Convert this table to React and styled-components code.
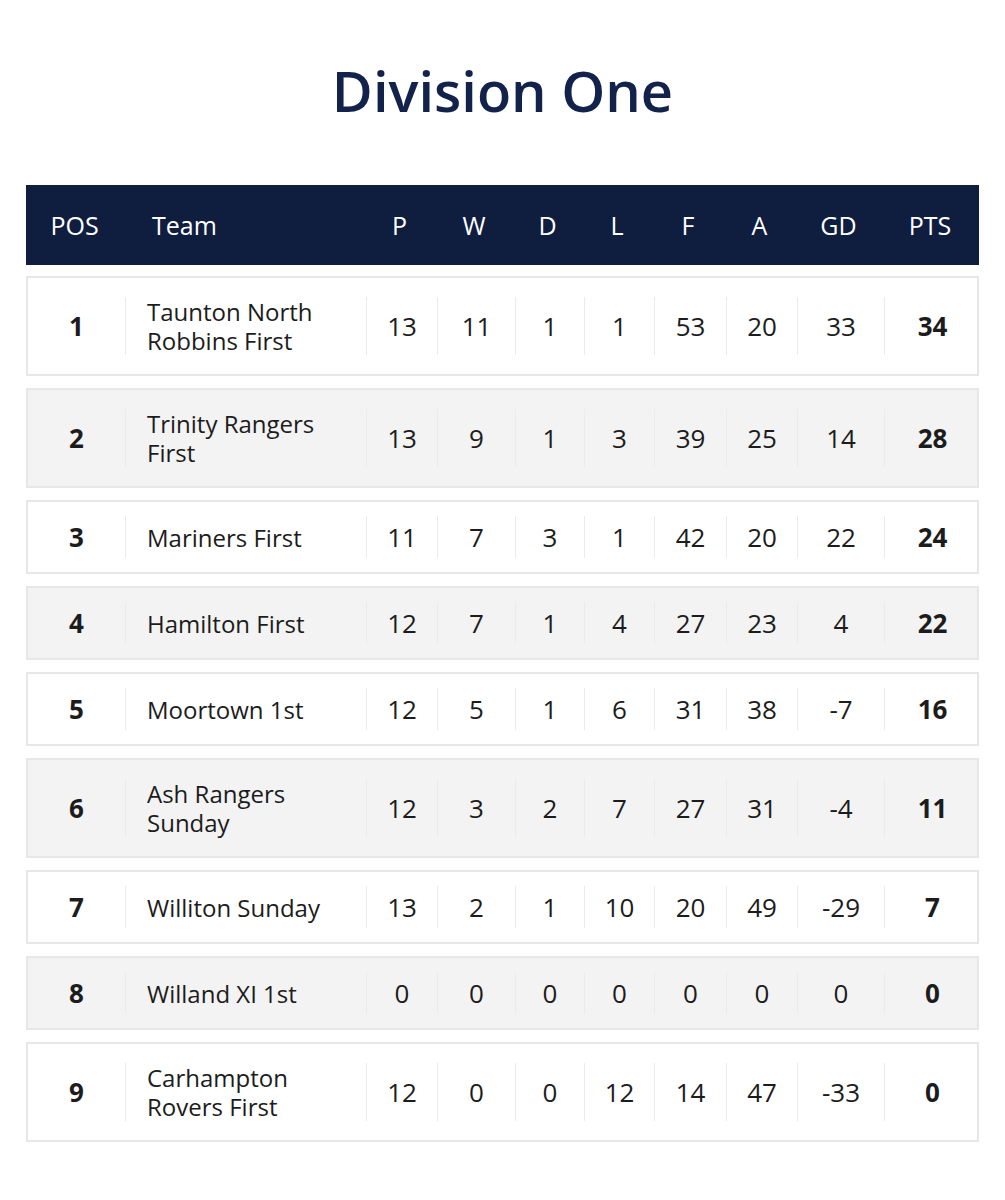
import React from 'react';
import styled, { createGlobalStyle } from 'styled-components';

const GlobalStyle = createGlobalStyle`
  body {
    margin: 0;
    background: #ffffff;
    font-family: "Open Sans", "Noto Sans", sans-serif;
  }
`;

const COLUMNS = '97px 241px 71px 78px 69px 70px 72px 71px 87px 96px';

const Page = styled.div`
  width: 1005px;
  padding: 0 26px 40px 26px;
  box-sizing: border-box;
`;

const Title = styled.h1`
  margin: 0;
  padding-top: 55px;
  height: 185px;
  box-sizing: border-box;
  text-align: center;
  font-size: 56px;
  line-height: 70px;
  font-weight: 600;
  color: #12224a;
`;

const Table = styled.div`
  display: flex;
  flex-direction: column;
  gap: 12px;
  width: 953px;
`;

const HeaderRow = styled.div`
  display: grid;
  grid-template-columns: ${COLUMNS};
  align-items: center;
  height: 80px;
  background: #0f1d3f;
  color: #ffffff;
  font-size: 25px;
  margin-bottom: -1px;
`;

const HeaderCell = styled.div`
  text-align: ${p => (p.left ? 'left' : 'center')};
  padding-left: ${p => (p.left ? '29px' : '0')};
`;

const Row = styled.div`
  display: grid;
  grid-template-columns: ${COLUMNS};
  padding: ${p => (p.tall ? '19px 0' : '14px 0')};
  border: 2px solid #e7e7e7;
  background: ${p => (p.shade ? '#f3f3f3' : '#ffffff')};
  color: #1c1c1c;
`;

const Cell = styled.div`
  display: flex;
  align-items: center;
  justify-content: ${p => (p.left ? 'flex-start' : 'center')};
  min-height: 42px;
  padding-left: ${p => (p.left ? '21px' : '0')};
  border-left: ${p => (p.first ? 'none' : '1px solid #ebebeb')};
  font-size: ${p => (p.left ? '24px' : '26px')};
  line-height: ${p => (p.left ? '29px' : '30px')};
  font-weight: ${p => (p.bold ? 700 : 400)};
`;

const TeamName = styled.div`
  display: flex;
  flex-direction: column;
`;

const teams = [
  ['1', ['Taunton North', 'Robbins First'], 13, 11, 1, 1, 53, 20, 33, 34],
  ['2', ['Trinity Rangers', 'First'], 13, 9, 1, 3, 39, 25, 14, 28],
  ['3', ['Mariners First'], 11, 7, 3, 1, 42, 20, 22, 24],
  ['4', ['Hamilton First'], 12, 7, 1, 4, 27, 23, 4, 22],
  ['5', ['Moortown 1st'], 12, 5, 1, 6, 31, 38, -7, 16],
  ['6', ['Ash Rangers', 'Sunday'], 12, 3, 2, 7, 27, 31, -4, 11],
  ['7', ['Williton Sunday'], 13, 2, 1, 10, 20, 49, -29, 7],
  ['8', ['Willand XI 1st'], 0, 0, 0, 0, 0, 0, 0, 0],
  ['9', ['Carhampton', 'Rovers First'], 12, 0, 0, 12, 14, 47, -33, 0],
];

const headers = ['P', 'W', 'D', 'L', 'F', 'A', 'GD'];

export default function App() {
  return (
    <Page>
      <GlobalStyle />
      <Title>Division One</Title>
      <Table>
        <HeaderRow>
          <HeaderCell>POS</HeaderCell>
          <HeaderCell left>Team</HeaderCell>
          {headers.map(h => (
            <HeaderCell key={h}>{h}</HeaderCell>
          ))}
          <HeaderCell>PTS</HeaderCell>
        </HeaderRow>
        {teams.map(([pos, name, ...stats], i) => {
          const pts = stats[stats.length - 1];
          const rest = stats.slice(0, -1);
          return (
            <Row key={pos} shade={i % 2 === 1} tall={name.length > 1}>
              <Cell first bold>{pos}</Cell>
              <Cell left>
                <TeamName>
                  {name.map(line => (
                    <span key={line}>{line}</span>
                  ))}
                </TeamName>
              </Cell>
              {rest.map((v, j) => (
                <Cell key={j}>{v}</Cell>
              ))}
              <Cell bold>{pts}</Cell>
            </Row>
          );
        })}
      </Table>
    </Page>
  );
}
